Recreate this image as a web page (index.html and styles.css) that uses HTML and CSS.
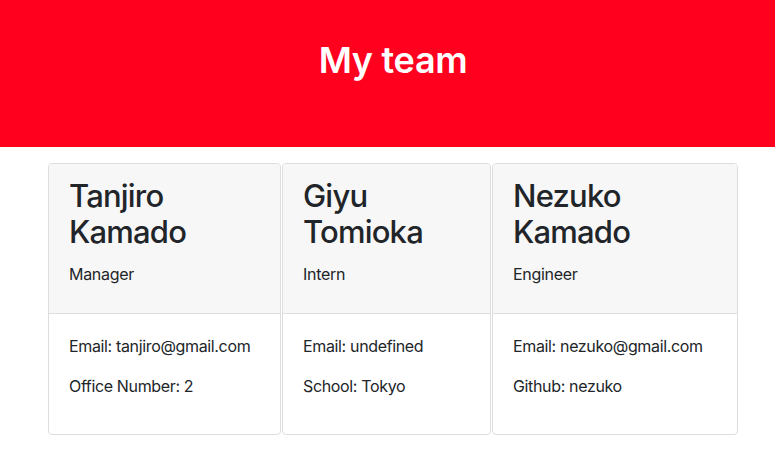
FILE: index.html
```html
<!DOCTYPE html>
<html lang="en">
<head>
<meta charset="utf-8">
<title>My team</title>
<link rel="stylesheet" href="styles.css">
</head>
<body>
<header class="hero">
  <h1 class="hero-title">My team</h1>
</header>
<main class="team">
  <section class="card card-a">
    <div class="card-header">
      <h2 class="card-name">Tanjiro<br>Kamado</h2>
      <p class="card-role">Manager</p>
    </div>
    <div class="card-body">
      <p class="card-line">Email: tanjiro@gmail.com</p>
      <p class="card-line">Office Number: 2</p>
    </div>
  </section>
  <section class="card card-b">
    <div class="card-header">
      <h2 class="card-name">Giyu<br>Tomioka</h2>
      <p class="card-role">Intern</p>
    </div>
    <div class="card-body">
      <p class="card-line">Email: undefined</p>
      <p class="card-line">School: Tokyo</p>
    </div>
  </section>
  <section class="card card-c">
    <div class="card-header">
      <h2 class="card-name">Nezuko<br>Kamado</h2>
      <p class="card-role">Engineer</p>
    </div>
    <div class="card-body">
      <p class="card-line">Email: nezuko@gmail.com</p>
      <p class="card-line">Github: nezuko</p>
    </div>
  </section>
</main>
</body>
</html>
```
FILE: styles.css
```css
* { box-sizing: border-box; }
html, body {
  margin: 0;
  padding: 0;
  background: #fff;
  font-family: Inter, "Noto Sans", sans-serif;
  color: #212529;
  font-size: 16px;
  line-height: 1.5;
}
.hero {
  background: #ff001f;
  height: 147px;
  display: flex;
  justify-content: center;
  padding: 39px 0 0 11px;
}
.hero-title {
  margin: 0;
  color: #fff;
  font-size: 36px;
  font-weight: 600;
  line-height: 1.2;
  letter-spacing: -0.3px;
}
.team {
  display: grid;
  grid-template-columns: 233px 209px 246px;
  column-gap: 1px;
  padding: 16px 0 0 48px;
}
.card {
  border: 1px solid #dedede;
  border-radius: 4px;
  display: flex;
  flex-direction: column;
  height: 272px;
  overflow: hidden;
}
.card-header {
  background: #f7f7f7;
  border-bottom: 1px solid #dedede;
  padding: 14px 20px 0;
  height: 150px;
}
.card-name {
  margin: 0;
  font-size: 31px;
  font-weight: 500;
  line-height: 36px;
  letter-spacing: -0.8px;
}
.card-role {
  margin: 12px 0 0;
  font-size: 16px;
  letter-spacing: -0.3px;
}
.card-body {
  padding: 20px 20px;
}
.card-line {
  margin: 0 0 16px;
  font-size: 16px;
  line-height: 24px;
  letter-spacing: -0.35px;
}
```
